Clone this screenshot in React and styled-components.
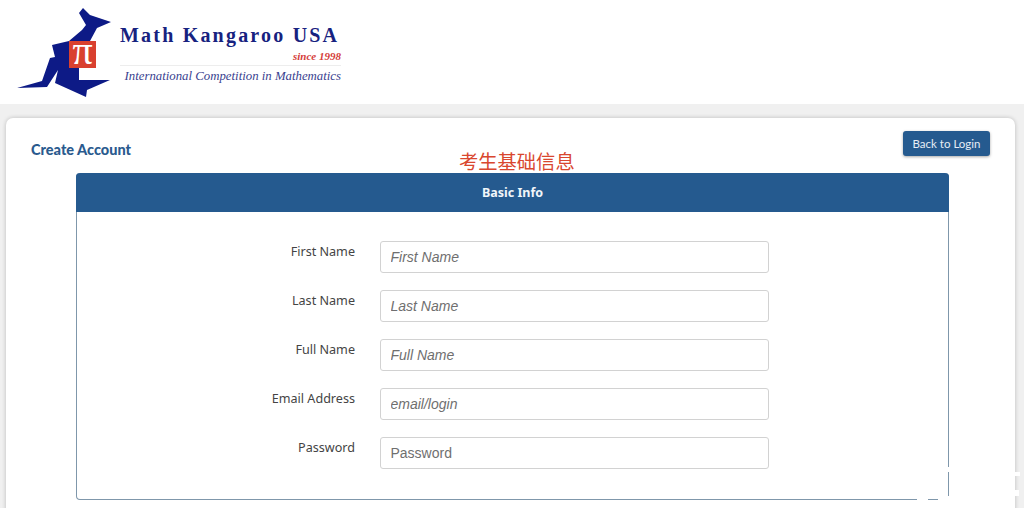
import React from "react";
import styled, { createGlobalStyle } from "styled-components";

const GlobalStyle = createGlobalStyle`
  html, body {
    margin: 0;
    padding: 0;
    background: #f0f0f0;
    overflow: hidden;
  }
  body {
    font-family: "Noto Sans", "Open Sans", sans-serif;
  }
`;

const Page = styled.div`
  width: 1024px;
  height: 508px;
  overflow: hidden;
  position: relative;
  display: flex;
  flex-direction: column;
  background: #f0f0f0;
`;

const Header = styled.header`
  height: 104px;
  flex: none;
  background: #fff;
  display: flex;
  align-items: flex-start;
  padding: 8px 0 0 17px;
  box-sizing: border-box;
`;

const LogoText = styled.div`
  width: 221px;
  margin-left: 9px;
  display: flex;
  flex-direction: column;
  align-items: flex-end;
`;

const LogoTitle = styled.div`
  margin-top: 15px;
  width: 100%;
  color: #17227f;
  font: bold 20px/24px "Liberation Serif", serif;
  letter-spacing: 2.2px;
  white-space: nowrap;
`;

const LogoSince = styled.div`
  color: #d5403a;
  font: italic bold 11px/12px "Liberation Serif", serif;
  margin-top: 3px;
  padding-bottom: 3px;
  width: 100%;
  text-align: right;
  border-bottom: 1px solid #ededed;
  box-sizing: border-box;
`;

const LogoTagline = styled.div`
  color: #3a3f8f;
  font: italic 12.8px/16px "Liberation Serif", serif;
  margin-top: 2px;
  white-space: nowrap;
`;

const Card = styled.main`
  margin: 14px 0 0 6px;
  width: 1009px;
  height: 420px;
  flex: none;
  background: #fff;
  border-radius: 7px;
  box-shadow: 0 0 4px rgba(0, 0, 0, 0.22);
  padding: 13px 25px 0 25px;
  box-sizing: border-box;
`;

const CardTop = styled.div`
  display: flex;
  justify-content: space-between;
  align-items: flex-start;
  height: 42px;
`;

const Heading = styled.h1`
  margin: 9px 0 0;
  color: #2a5a8e;
  font-family: "Lato", sans-serif;
  font-size: 14.5px;
  line-height: 20px;
  font-weight: 900;
`;

const BackButton = styled.button`
  width: 87px;
  height: 25px;
  padding: 0;
  border: none;
  border-radius: 3px;
  background: #255a8f;
  color: #e6edf5;
  font-family: "Lato", sans-serif;
  font-size: 11.5px;
  box-shadow: 0 1px 3px rgba(0, 0, 0, 0.35);
`;

const Note = styled.div`
  position: absolute;
  top: 149px;
  left: 459px;
  color: #d9472f;
  font: 19.3px/24px "Noto Sans CJK SC", sans-serif;
`;

const Panel = styled.section`
  width: 873px;
  height: 327px;
  margin-left: 45px;
  border: 1px solid #7f97ab;
  border-top: none;
  border-radius: 4px;
  box-sizing: border-box;
`;

const PanelTitle = styled.div`
  height: 39px;
  margin: 0 -1px;
  border-radius: 4px 4px 0 0;
  background: #255a8f;
  color: #f1f5f9;
  font-size: 12.5px;
  font-weight: 700;
  display: flex;
  align-items: center;
  justify-content: center;
`;

const Form = styled.form`
  padding-top: 29px;
  display: flex;
  flex-direction: column;
  gap: 17px;
`;

const Row = styled.div`
  display: flex;
  align-items: flex-start;
  height: 32px;
`;

const Label = styled.label`
  width: 278px;
  margin-top: 1px;
  text-align: right;
  color: #444;
  font-size: 12.6px;
  line-height: 20px;
`;

const Field = styled.input`
  margin-left: 25px;
  width: 389px;
  height: 32px;
  box-sizing: border-box;
  padding: 0 9.5px;
  border: 1px solid #d2d2d2;
  border-radius: 3px;
  background: #fff;
  font-family: "Liberation Sans", Arial, sans-serif;
  font-size: 14px;
  &::placeholder {
    color: #6f6f6f;
    opacity: 1;
    font-style: ${(p) => (p.$plain ? "normal" : "italic")};
  }
`;

// white specks the screenshot carries over the panel's corner
const Speck = styled.div`
  position: absolute;
  left: ${(p) => p.$x}px;
  top: ${(p) => p.$y}px;
  width: ${(p) => p.$w}px;
  height: ${(p) => p.$h}px;
  background: #fff;
`;

const Kangaroo = () => (
  <svg width="94" height="90" viewBox="17 8 94 90" style={{ flex: "none" }}>
    <polygon
      fill="#0d1a86"
      points="79,13 83,8 90,15 111,22 97,28 90,41 90,68 79,68 79,80 110,80 87,90 86,97 55,83 58,70 47,87 17,88 42,81 50,58 55,57 52,45 69,41 82,30 86,25"
    />
    <rect x="69" y="41" width="27" height="27" fill="#d9402f" />
    <text
      x="82.5"
      y="64"
      textAnchor="middle"
      fill="#fff"
      fontFamily="Liberation Serif, serif"
      fontSize="40"
    >
      π
    </text>
  </svg>
);

const fields = [
  { label: "First Name", placeholder: "First Name" },
  { label: "Last Name", placeholder: "Last Name" },
  { label: "Full Name", placeholder: "Full Name" },
  { label: "Email Address", placeholder: "email/login" },
  { label: "Password", placeholder: "Password", plain: true },
];

export default function App() {
  return (
    <Page>
      <GlobalStyle />
      <Header>
        <Kangaroo />
        <LogoText>
          <LogoTitle>Math Kangaroo USA</LogoTitle>
          <LogoSince>since 1998</LogoSince>
          <LogoTagline>International Competition in Mathematics</LogoTagline>
        </LogoText>
      </Header>
      <Card>
        <CardTop>
          <Heading>Create Account</Heading>
          <BackButton type="button">Back to Login</BackButton>
        </CardTop>
        <Panel>
          <PanelTitle>Basic Info</PanelTitle>
          <Form>
            {fields.map((f) => (
              <Row key={f.label}>
                <Label>{f.label}</Label>
                <Field placeholder={f.placeholder} $plain={f.plain} />
              </Row>
            ))}
          </Form>
        </Panel>
      </Card>
      <Note>考生基础信息</Note>
      <Speck $x={917} $y={496} $w={11} $h={5} />
      <Speck $x={938} $y={496} $w={12} $h={5} />
      <Speck $x={946} $y={467} $w={4} $h={5} />
      <Speck $x={1015} $y={472} $w={5} $h={4} />
      <Speck $x={1015} $y={490} $w={4} $h={6} />
    </Page>
  );
}
